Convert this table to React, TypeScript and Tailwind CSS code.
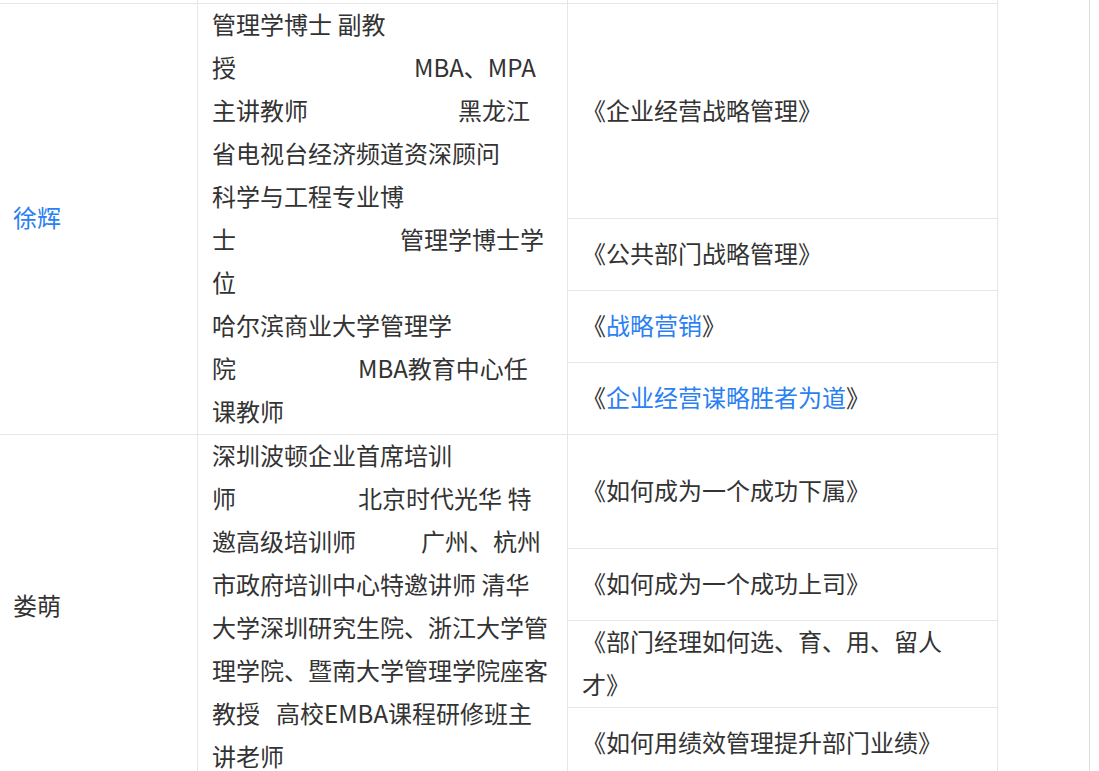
import React from 'react';

// 讲师课程表（截取部分）

type Line = { left: string; right?: string; gap?: number };

interface CourseItem {
  title: string;
  link?: boolean;
  height?: string; // 子单元格高度（含下边框）
}

interface TeacherRow {
  name: string;
  nameLink?: boolean;
  lines: Line[];
  courses: CourseItem[];
}

const rows: TeacherRow[] = [
  {
    name: '徐辉',
    nameLink: true,
    lines: [
      { left: '管理学博士 副教' },
      { left: '授', right: 'MBA、MPA', gap: 178 },
      { left: '主讲教师', right: '黑龙江', gap: 150 },
      { left: '省电视台经济频道资深顾问' },
      { left: '科学与工程专业博' },
      { left: '士', right: '管理学博士学', gap: 164 },
      { left: '位' },
      { left: '哈尔滨商业大学管理学' },
      { left: '院', right: 'MBA教育中心任', gap: 122 },
      { left: '课教师' },
    ],
    courses: [
      { title: '企业经营战略管理', height: 'h-[215px] border-b' },
      { title: '公共部门战略管理', height: 'h-[72px] border-b' },
      { title: '战略营销', link: true, height: 'h-[72px] border-b' },
      { title: '企业经营谋略胜者为道', link: true, height: 'flex-1' },
    ],
  },
  {
    name: '娄萌',
    lines: [
      { left: '深圳波顿企业首席培训' },
      { left: '师', right: '北京时代光华 特', gap: 122 },
      { left: '邀高级培训师', right: '广州、杭州', gap: 65 },
      { left: '市政府培训中心特邀讲师 清华' },
      { left: '大学深圳研究生院、浙江大学管' },
      { left: '理学院、暨南大学管理学院座客' },
      { left: '教授', right: '高校EMBA课程研修班主', gap: 16 },
      { left: '讲老师' },
    ],
    courses: [
      { title: '如何成为一个成功下属', height: 'h-[114px] border-b' },
      { title: '如何成为一个成功上司', height: 'h-[72px] border-b' },
      { title: '部门经理如何选、育、用、留人才', height: 'h-[87px] border-b' },
      { title: '如何用绩效管理提升部门业绩', height: 'flex-1' },
    ],
  },
];

function CourseCell({ course }: { course: CourseItem }) {
  return (
    <div className={`flex items-center px-[14px] pb-[4px] border-[#e6e6e6] ${course.height}`}>
      <p className="leading-[43px]">
        《{course.link ? <a className="text-[#2a7ff2]">{course.title}</a> : course.title}》
      </p>
    </div>
  );
}

function Row({ row }: { row: TeacherRow }) {
  return (
    <div className="grid grid-cols-[198px_370px_430px] border-b border-[#e6e6e6]">
      {/* 讲师姓名 */}
      <div className="flex items-center pl-[13px] pb-[4px] border-r border-[#e6e6e6]">
        <span className={row.nameLink ? 'text-[#2a7ff2]' : ''}>{row.name}</span>
      </div>

      {/* 简介 */}
      <div className="px-[14px] border-r border-[#e6e6e6]">
        {row.lines.map((line, i) => (
          <div key={i} className="flex h-[43px] leading-[39px] whitespace-pre">
            <span>{line.left}</span>
            {line.right && (
              <span style={{ marginLeft: line.gap }}>{line.right}</span>
            )}
          </div>
        ))}
      </div>

      {/* 课程 */}
      <div className="flex flex-col border-r border-[#e6e6e6]">
        {row.courses.map((c) => (
          <CourseCell key={c.title} course={c} />
        ))}
      </div>
    </div>
  );
}

export default function App() {
  return (
    <div className="h-[771px] w-full overflow-hidden bg-white text-[24px] text-[#333] font-['Noto_Sans_CJK_SC','Microsoft_YaHei',sans-serif]">
      <div className="w-[1090px] h-full border-r border-[#dcdcdc]">
        <div className="w-[998px]">
          {/* 上一行的底部 */}
          <div className="grid grid-cols-[198px_370px_430px] h-[4px] border-b border-[#e6e6e6]">
            <div className="border-r border-[#e6e6e6]" />
            <div className="border-r border-[#e6e6e6]" />
            <div className="border-r border-[#e6e6e6]" />
          </div>
          {rows.map((row) => (
            <Row key={row.name} row={row} />
          ))}
        </div>
      </div>
    </div>
  );
}
